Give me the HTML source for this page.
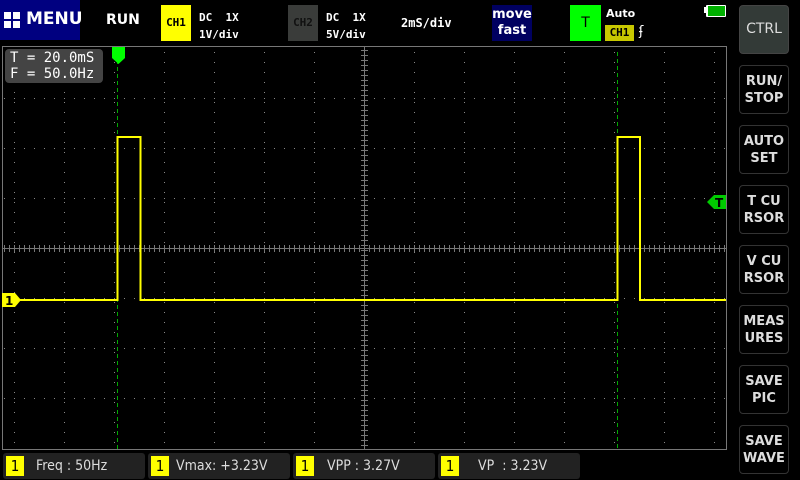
<!DOCTYPE html>
<html><head><meta charset="utf-8"><style>
body{margin:0;background:#000;width:800px;height:480px;overflow:hidden;position:relative;font-family:"Liberation Mono","DejaVu Sans Mono",monospace;color:#fff}
.a{position:absolute}
.btn{position:absolute;left:739px;width:50px;height:49px;border:1px solid #333;border-radius:4px;box-sizing:border-box;color:#ddd;font:bold 13px "DejaVu Sans","Liberation Sans",sans-serif;display:flex;align-items:center;justify-content:center;text-align:center;line-height:17px}
.bar{position:absolute;top:453px;height:26px;width:142px;background:#222;border-radius:3px;font:14px "DejaVu Sans Condensed","Liberation Sans Narrow","Liberation Sans",sans-serif;color:#ddd;line-height:26px}
.bar .n{position:absolute;left:3px;top:3px;width:18px;height:20px;background:#ff0;color:#000;text-align:center;line-height:20px;font-size:15px}
</style></head><body>
<div class="a" style="left:0;top:0;width:80px;height:40px;background:#000080"></div>
<div class="a" style="left:4px;top:12px;width:7px;height:7px;background:#fff"></div>
<div class="a" style="left:13px;top:12px;width:7px;height:7px;background:#fff"></div>
<div class="a" style="left:4px;top:21px;width:7px;height:7px;background:#fff"></div>
<div class="a" style="left:13px;top:21px;width:7px;height:7px;background:#fff"></div>
<div class="a" style="left:26px;top:9px;font:bold 17px 'DejaVu Sans',sans-serif;color:#fff">MENU</div>
<div class="a" style="left:106px;top:12px;font:bold 14px 'DejaVu Sans',sans-serif">RUN</div>
<div class="a" style="left:161px;top:5px;width:30px;height:36px;background:#ff0;color:#000;font:bold 11px 'DejaVu Sans Mono',monospace;line-height:36px;text-align:center">CH1</div>
<div class="a" style="left:199px;top:9px;font:bold 11px 'DejaVu Sans Mono',monospace;line-height:17px">DC&nbsp;&nbsp;1X<br>1V/div</div>
<div class="a" style="left:288px;top:5px;width:30px;height:36px;background:#3a3c3a;color:#111;font:bold 11px 'DejaVu Sans Mono',monospace;line-height:36px;text-align:center">CH2</div>
<div class="a" style="left:326px;top:9px;font:bold 11px 'DejaVu Sans Mono',monospace;line-height:17px">DC&nbsp;&nbsp;1X<br>5V/div</div>
<div class="a" style="left:401px;top:16px;font:bold 12px 'DejaVu Sans Mono',monospace">2mS/div</div>
<div class="a" style="left:492px;top:5px;width:40px;height:36px;background:#000060;font:bold 13px 'DejaVu Sans',sans-serif;line-height:16px;text-align:center;padding-top:2px;box-sizing:border-box">move<br>fast</div>
<div class="a" style="left:570px;top:5px;width:31px;height:36px;background:#0f0;color:#000;font:14px 'DejaVu Sans',sans-serif;line-height:36px;text-align:center">T</div>
<div class="a" style="left:606px;top:7px;font:bold 11px 'DejaVu Sans',sans-serif">Auto</div>
<div class="a" style="left:605px;top:25px;width:29px;height:16px;background:#c8c800;color:#000;font:bold 11px 'DejaVu Sans Mono',monospace;line-height:16px;text-align:center">CH1</div>
<div class="a" style="left:639px;top:24px;font:13px 'DejaVu Sans',sans-serif">ʄ</div>
<div class="a" style="left:704px;top:7px;width:3px;height:6px;background:#fff"></div>
<div class="a" style="left:706px;top:5px;width:20px;height:12px;background:#fff;border-radius:1px"></div>
<div class="a" style="left:708px;top:6px;width:17px;height:10px;background:#00b000"></div>
<svg class="a" style="left:0;top:0" width="730" height="452">
<rect x="2.5" y="46.5" width="724" height="403" fill="none" stroke="#777" stroke-width="1"/>
<g stroke="#888" stroke-width="1" stroke-dasharray="1 9">
<line x1="14.5" y1="52" x2="14.5" y2="449"/><line x1="64.5" y1="52" x2="64.5" y2="449"/><line x1="114.5" y1="52" x2="114.5" y2="449"/><line x1="164.5" y1="52" x2="164.5" y2="449"/><line x1="214.5" y1="52" x2="214.5" y2="449"/><line x1="264.5" y1="52" x2="264.5" y2="449"/><line x1="314.5" y1="52" x2="314.5" y2="449"/><line x1="414.5" y1="52" x2="414.5" y2="449"/><line x1="464.5" y1="52" x2="464.5" y2="449"/><line x1="514.5" y1="52" x2="514.5" y2="449"/><line x1="564.5" y1="52" x2="564.5" y2="449"/><line x1="614.5" y1="52" x2="614.5" y2="449"/><line x1="664.5" y1="52" x2="664.5" y2="449"/><line x1="714.5" y1="52" x2="714.5" y2="449"/>
</g>
<g stroke="#888" stroke-width="1" stroke-dasharray="1 9">
<line x1="4" y1="98.5" x2="726" y2="98.5"/><line x1="4" y1="148.5" x2="726" y2="148.5"/><line x1="4" y1="198.5" x2="726" y2="198.5"/><line x1="4" y1="298.5" x2="726" y2="298.5"/><line x1="4" y1="348.5" x2="726" y2="348.5"/><line x1="4" y1="398.5" x2="726" y2="398.5"/>
</g>
<line x1="3" y1="248.5" x2="726" y2="248.5" stroke="#777"/>
<line x1="364.5" y1="47" x2="364.5" y2="449" stroke="#777"/>
<line x1="4" y1="248.5" x2="726" y2="248.5" stroke="#777" stroke-width="7" stroke-dasharray="1 4"/>
<line x1="364.5" y1="47" x2="364.5" y2="449" stroke="#777" stroke-width="7" stroke-dasharray="1 4" stroke-dashoffset="-3"/>
<g stroke="#0a0" stroke-width="1" stroke-dasharray="4 3">
<line x1="117.5" y1="60" x2="117.5" y2="449"/><line x1="617.5" y1="52" x2="617.5" y2="449"/>
</g>
<polyline fill="none" stroke="#ff0" stroke-width="2" points="18,300 117.5,300 117.5,137 140.5,137 140.5,300 617.5,300 617.5,137 640,137 640,300 726,300"/>
<path d="M112 47H125V58L118.5 64L112 58Z" fill="#0f0"/>
<path d="M2 293H15L21 300L15 307H2Z" fill="#ff0"/>
<text x="5" y="305" font-family="DejaVu Sans" font-weight="bold" font-size="12" fill="#000">1</text>
<path d="M726 195H714L707 202L714 209H726Z" fill="#0c0"/>
<text x="715" y="207" font-family="DejaVu Sans" font-weight="bold" font-size="12" fill="#000">T</text>
</svg>
<div class="a" style="left:5px;top:49px;width:98px;height:34px;background:#444;border-radius:4px;font:14px 'DejaVu Sans Mono',monospace;line-height:16px;padding:1px 0 0 5px;box-sizing:border-box">T = 20.0mS<br>F = 50.0Hz</div>
<div class="btn" style="top:5px;background:#333a37;border-color:#444;font-weight:normal;font-size:14px">CTRL</div>
<div class="btn" style="top:65px">RUN/<br>STOP</div>
<div class="btn" style="top:125px">AUTO<br>SET</div>
<div class="btn" style="top:185px">T CU<br>RSOR</div>
<div class="btn" style="top:245px">V CU<br>RSOR</div>
<div class="btn" style="top:305px">MEAS<br>URES</div>
<div class="btn" style="top:365px">SAVE<br>PIC</div>
<div class="btn" style="top:425px">SAVE<br>WAVE</div>
<div class="bar" style="left:3px"><span class="n">1</span><span class="a" style="left:33px">Freq : 50Hz</span></div>
<div class="bar" style="left:148px"><span class="n">1</span><span class="a" style="left:28px">Vmax: +3.23V</span></div>
<div class="bar" style="left:293px"><span class="n">1</span><span class="a" style="left:34px">VPP : 3.27V</span></div>
<div class="bar" style="left:438px"><span class="n">1</span><span class="a" style="left:40px">VP &nbsp;: 3.23V</span></div>
</body></html>
